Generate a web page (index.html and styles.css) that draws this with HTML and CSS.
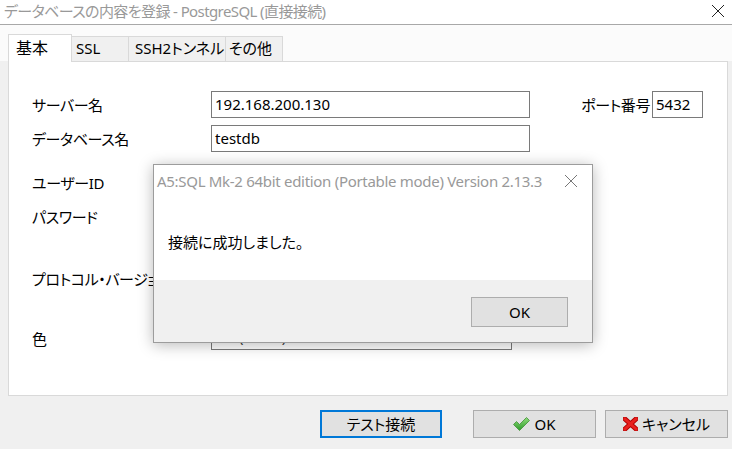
FILE: index.html
```html
<!DOCTYPE html>
<html lang="ja">
<head>
<meta charset="utf-8">
<link rel="stylesheet" href="styles.css">
</head>
<body>
<div class="window">
  <div class="titlebar">
    <span class="title">データベースの内容を登録 - PostgreSQL (直接接続)</span>
    <svg class="close" width="14" height="14" viewBox="0 0 14 14"><path d="M1 1 L13 13 M13 1 L1 13" stroke="#222" stroke-width="1"/></svg>
  </div>
  <div class="body">
    <div class="tabs">
      <div class="tab active w-basic">基本</div>
      <div class="tab w-ssl">SSL</div>
      <div class="tab w-ssh">SSH2トンネル</div>
      <div class="tab w-other">その他</div>
    </div>
    <div class="panel">
      <div class="row">
        <span class="label">サーバー名</span>
        <div class="input wide">192.168.200.130</div>
        <span class="label port-label">ポート番号</span>
        <div class="input port">5432</div>
      </div>
      <div class="row gap-s">
        <span class="label">データベース名</span>
        <div class="input wide">testdb</div>
      </div>
      <div class="row gap-m">
        <span class="label">ユーザーID</span>
        <div class="input wide"></div>
      </div>
      <div class="row gap-s">
        <span class="label">パスワード</span>
        <div class="input wide"></div>
      </div>
      <div class="row gap-l">
        <span class="label">プロトコル・バージョン</span>
        <div class="input wide"></div>
      </div>
      <div class="row gap-xl">
        <span class="label">色</span>
        <div class="input combo"><span class="swatch"></span><span class="none">(None)</span></div>
      </div>
    </div>
    <div class="buttons">
      <div class="btn test">テスト接続</div>
      <div class="btn ok">
        <svg width="17" height="14" viewBox="0 0 17 14"><defs><linearGradient id="g" x1="0" y1="0" x2="0" y2="1"><stop offset="0" stop-color="#8fdc7a"/><stop offset="1" stop-color="#2e9a2a"/></linearGradient></defs><polygon points="0.5,7.5 3.5,4.5 6.5,7.5 13.5,0.5 16.5,3.5 6.5,13.5" fill="url(#g)" stroke="#3f8f35" stroke-width="0.8"/></svg>
        <span>OK</span>
      </div>
      <div class="btn cancel">
        <svg width="15" height="14" viewBox="0 0 15 14"><path d="M2 2 L13 12 M13 2 L2 12" stroke="#b30000" stroke-width="5" stroke-linecap="square"/><path d="M2 2 L13 12 M13 2 L2 12" stroke="#e8201e" stroke-width="3" stroke-linecap="square"/></svg>
        <span>キャンセル</span>
      </div>
    </div>
  </div>
  <div class="msgbox">
    <div class="msg-main">
      <div class="msg-title">
        <span>A5:SQL Mk-2 64bit edition (Portable mode) Version 2.13.3</span>
        <svg class="msg-close" width="14" height="14" viewBox="0 0 14 14"><path d="M1 1 L13 13 M13 1 L1 13" stroke="#777" stroke-width="1"/></svg>
      </div>
      <div class="msg-text">接続に成功しました。</div>
    </div>
    <div class="msg-foot">
      <div class="btn msg-ok">OK</div>
    </div>
  </div>
</div>
</body>
</html>
```

FILE: styles.css
```css
* { box-sizing: border-box; }
html, body { margin: 0; padding: 0; }
body {
  width: 732px;
  height: 449px;
  overflow: hidden;
  background: #f0f0f0;
  font-family: "Noto Sans", "Noto Sans CJK JP", sans-serif;
  font-size: 15px;
  font-feature-settings: "palt";
  color: #000;
}
.window { position: relative; width: 732px; height: 449px; }
.titlebar {
  height: 25px;
  background: #fff;
  border-bottom: 1px solid #a8a8a8;
  display: flex;
  align-items: center;
  justify-content: space-between;
  padding: 0 7px 2px 4px;
}
.title { color: #999; font-size: 15px; line-height: 20px; letter-spacing: -0.6px; }
.close { display: block; }
.body { background: #f0f0f0; }
.tabs {
  display: flex;
  align-items: flex-end;
  padding: 9px 0 0 8px;
  background: #fbfbfb;
  height: 36px;
}
.tab {
  height: 25px;
  border: 1px solid #d9d9d9;
  border-bottom: none;
  border-left: none;
  background: #f0f0f0;
  line-height: 23px;
  padding-left: 4px;
  font-size: 15px;
  white-space: nowrap;
}
.tab.active {
  height: 28px;
  background: #fff;
  border-left: 1px solid #d9d9d9;
  padding-left: 7px;
  line-height: 26px;
  position: relative;
  z-index: 1;
  margin-bottom: -1px;
  font-size: 16px;
}
.w-basic { width: 64px; }
.w-ssl { width: 57px; }
.w-ssh { width: 97px; padding-left: 6px; }
.w-other { width: 57px; padding-left: 3px; }
.panel {
  margin-left: 8px;
  width: 720px;
  height: 335px;
  background: #fff;
  border: 1px solid #d9d9d9;
  padding: 29px 0 0 23px;
  display: flex;
  flex-direction: column;
}
.row { display: flex; align-items: center; height: 27px; }
.gap-s { margin-top: 7px; }
.gap-m { margin-top: 17px; }
.gap-l { margin-top: 35px; }
.gap-xl { margin-top: 31px; }
.label { width: 179px; flex: none; white-space: nowrap; line-height: 20px; letter-spacing: -0.4px; }
.row:last-child .label { margin-top: 4px; }
.port-label { width: 122px; text-align: right; padding-right: 2px; }
.input {
  height: 27px;
  border: 1px solid #7a7a7a;
  background: #fff;
  padding-left: 3px;
  line-height: 25px;
  font-size: 15px;
  white-space: nowrap;
}
.wide { width: 319px; }
.port { width: 51px; }
.combo {
  width: 301px;
  display: flex;
  align-items: center;
  gap: 6px;
}
.swatch { width: 18px; height: 11px; background: #000; }
.none { color: #333; }
.buttons {
  display: flex;
  justify-content: flex-end;
  padding: 14px 4px 0 0;
}
.btn {
  height: 28px;
  background: #e1e1e1;
  border: 1px solid #adadad;
  display: flex;
  align-items: center;
  justify-content: center;
  gap: 3px;
  font-size: 15px;
  line-height: 20px;
}
.test { width: 122px; border: 2px solid #0078d7; margin-right: 31px; }
.ok { width: 123px; margin-right: 9px; gap: 4px; }
.cancel { width: 123px; gap: 4px; }
.ok svg, .cancel svg { display: block; }
.msgbox {
  position: absolute;
  left: 153px;
  top: 164px;
  width: 440px;
  height: 179px;
  border: 1px solid #9c9c9c;
  background: #f0f0f0;
  box-shadow: 0 2px 14px rgba(0,0,0,0.28);
  display: flex;
  flex-direction: column;
}
.msg-main { background: #fff; height: 115px; }
.msg-title {
  height: 32px;
  display: flex;
  align-items: center;
  justify-content: space-between;
  padding: 0 14px 0 3px;
  color: #999;
  font-size: 15px;
  letter-spacing: -0.3px;
}
.msg-close { display: block; }
.msg-text { padding: 35px 0 0 14px; line-height: 20px; }
.msg-foot {
  flex: 1;
  display: flex;
  justify-content: flex-end;
  align-items: flex-start;
  padding: 17px 24px 0 0;
}
.msg-ok { width: 97px; height: 30px; }
```
